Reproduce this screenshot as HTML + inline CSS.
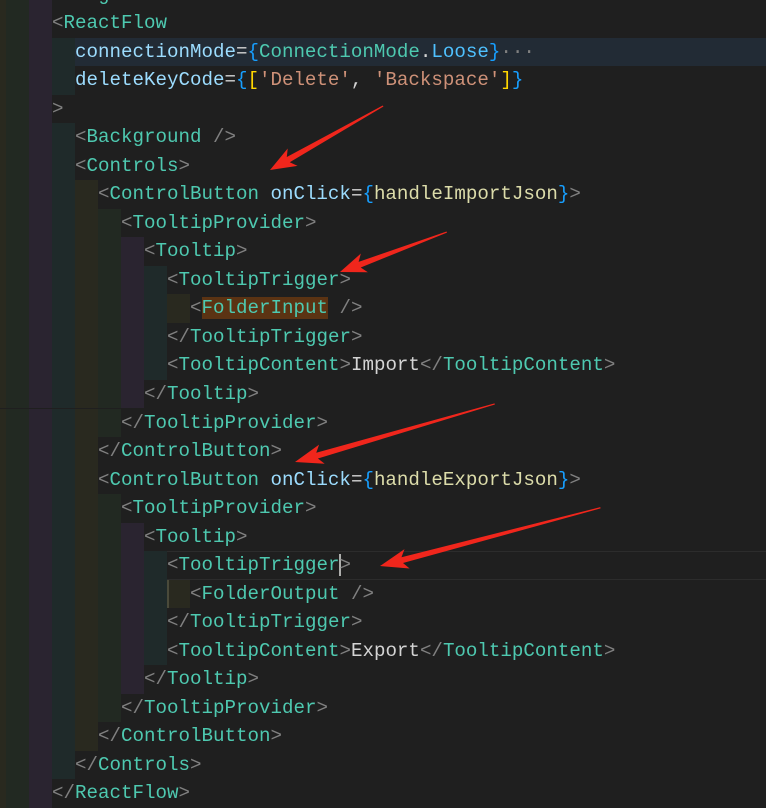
<!DOCTYPE html>
<html><head><meta charset="utf-8"><style>
html,body{margin:0;padding:0;background:#1f1f1f;width:766px;height:808px;overflow:hidden}
#ed{position:relative;width:766px;height:808px;font-family:"Liberation Mono",monospace;font-size:19.17px;color:#d4d4d4}
#ls{position:absolute;left:0;top:1.5px;width:766px;height:808px}
.l{position:absolute;left:0;width:766px;height:28.52px;line-height:28.52px;white-space:pre}
.g{display:inline-block;height:28.52px;vertical-align:top}
.Y{background:#29291f}.G{background:#222922}.P{background:#2a2430}.T{background:#1f2a2a}
.w6{width:6px}.w23{width:23px}
.b{color:#808080}.t{color:#4ec9b0}.a{color:#9cdcfe}.c{color:#179fff}.y{color:#ffd700}.s{color:#ce9178}.f{color:#dcdcaa}.v{color:#4fc1ff}
.hl{background:#222b35}
.cur{box-shadow:inset 0 1px 0 #2c2c2c,inset 0 -1px 0 #2c2c2c}
.fi{background:#5b3313}
</style></head><body><div id="ed"><div id="ls">
<div class="l" style="top:-20.8px"><span class="g w6 Y"></span><span class="g w23 G"></span><span class="g w23 P"></span><span class="b">&lt;/</span><span class="t">svg</span><span class="b">&gt;</span></div>
<div class="l" style="top:7.72px"><span class="g w6 Y"></span><span class="g w23 G"></span><span class="g w23 P"></span><span class="b">&lt;</span><span class="t">ReactFlow</span></div>
<div class="l hl" style="top:36.24px"><span class="g w6 Y"></span><span class="g w23 G"></span><span class="g w23 P"></span><span class="g w23 T"></span><span class="a">connectionMode</span>=<span class="c">{</span><span class="t">ConnectionMode</span>.<span class="v">Loose</span><span class="c">}</span><span class="b">···</span></div>
<div class="l" style="top:64.76px"><span class="g w6 Y"></span><span class="g w23 G"></span><span class="g w23 P"></span><span class="g w23 T"></span><span class="a">deleteKeyCode</span>=<span class="c">{</span><span class="y">[</span><span class="s">'Delete'</span>, <span class="s">'Backspace'</span><span class="y">]</span><span class="c">}</span></div>
<div class="l" style="top:93.28px"><span class="g w6 Y"></span><span class="g w23 G"></span><span class="g w23 P"></span><span class="b">&gt;</span></div>
<div class="l" style="top:121.8px"><span class="g w6 Y"></span><span class="g w23 G"></span><span class="g w23 P"></span><span class="g w23 T"></span><span class="b">&lt;</span><span class="t">Background</span> <span class="b">/&gt;</span></div>
<div class="l" style="top:150.32px"><span class="g w6 Y"></span><span class="g w23 G"></span><span class="g w23 P"></span><span class="g w23 T"></span><span class="b">&lt;</span><span class="t">Controls</span><span class="b">&gt;</span></div>
<div class="l" style="top:178.84px"><span class="g w6 Y"></span><span class="g w23 G"></span><span class="g w23 P"></span><span class="g w23 T"></span><span class="g w23 Y"></span><span class="b">&lt;</span><span class="t">ControlButton</span> <span class="a">onClick</span>=<span class="c">{</span><span class="f">handleImportJson</span><span class="c">}</span><span class="b">&gt;</span></div>
<div class="l" style="top:207.36px"><span class="g w6 Y"></span><span class="g w23 G"></span><span class="g w23 P"></span><span class="g w23 T"></span><span class="g w23 Y"></span><span class="g w23 G"></span><span class="b">&lt;</span><span class="t">TooltipProvider</span><span class="b">&gt;</span></div>
<div class="l" style="top:235.88px"><span class="g w6 Y"></span><span class="g w23 G"></span><span class="g w23 P"></span><span class="g w23 T"></span><span class="g w23 Y"></span><span class="g w23 G"></span><span class="g w23 P"></span><span class="b">&lt;</span><span class="t">Tooltip</span><span class="b">&gt;</span></div>
<div class="l" style="top:264.4px"><span class="g w6 Y"></span><span class="g w23 G"></span><span class="g w23 P"></span><span class="g w23 T"></span><span class="g w23 Y"></span><span class="g w23 G"></span><span class="g w23 P"></span><span class="g w23 T"></span><span class="b">&lt;</span><span class="t">TooltipTrigger</span><span class="b">&gt;</span></div>
<div class="l" style="top:292.92px"><span class="g w6 Y"></span><span class="g w23 G"></span><span class="g w23 P"></span><span class="g w23 T"></span><span class="g w23 Y"></span><span class="g w23 G"></span><span class="g w23 P"></span><span class="g w23 T"></span><span class="g w23 Y"></span><span class="b">&lt;</span><span class="t fi">FolderInput</span> <span class="b">/&gt;</span></div>
<div class="l" style="top:321.44px"><span class="g w6 Y"></span><span class="g w23 G"></span><span class="g w23 P"></span><span class="g w23 T"></span><span class="g w23 Y"></span><span class="g w23 G"></span><span class="g w23 P"></span><span class="g w23 T"></span><span class="b">&lt;/</span><span class="t">TooltipTrigger</span><span class="b">&gt;</span></div>
<div class="l" style="top:349.96px"><span class="g w6 Y"></span><span class="g w23 G"></span><span class="g w23 P"></span><span class="g w23 T"></span><span class="g w23 Y"></span><span class="g w23 G"></span><span class="g w23 P"></span><span class="g w23 T"></span><span class="b">&lt;</span><span class="t">TooltipContent</span><span class="b">&gt;</span>Import<span class="b">&lt;/</span><span class="t">TooltipContent</span><span class="b">&gt;</span></div>
<div class="l" style="top:378.48px"><span class="g w6 Y"></span><span class="g w23 G"></span><span class="g w23 P"></span><span class="g w23 T"></span><span class="g w23 Y"></span><span class="g w23 G"></span><span class="g w23 P"></span><span class="b">&lt;/</span><span class="t">Tooltip</span><span class="b">&gt;</span></div>
<div class="l" style="top:407px"><span class="g w6 Y"></span><span class="g w23 G"></span><span class="g w23 P"></span><span class="g w23 T"></span><span class="g w23 Y"></span><span class="g w23 G"></span><span class="b">&lt;/</span><span class="t">TooltipProvider</span><span class="b">&gt;</span></div>
<div class="l" style="top:435.52px"><span class="g w6 Y"></span><span class="g w23 G"></span><span class="g w23 P"></span><span class="g w23 T"></span><span class="g w23 Y"></span><span class="b">&lt;/</span><span class="t">ControlButton</span><span class="b">&gt;</span></div>
<div class="l" style="top:464.04px"><span class="g w6 Y"></span><span class="g w23 G"></span><span class="g w23 P"></span><span class="g w23 T"></span><span class="g w23 Y"></span><span class="b">&lt;</span><span class="t">ControlButton</span> <span class="a">onClick</span>=<span class="c">{</span><span class="f">handleExportJson</span><span class="c">}</span><span class="b">&gt;</span></div>
<div class="l" style="top:492.56px"><span class="g w6 Y"></span><span class="g w23 G"></span><span class="g w23 P"></span><span class="g w23 T"></span><span class="g w23 Y"></span><span class="g w23 G"></span><span class="b">&lt;</span><span class="t">TooltipProvider</span><span class="b">&gt;</span></div>
<div class="l" style="top:521.08px"><span class="g w6 Y"></span><span class="g w23 G"></span><span class="g w23 P"></span><span class="g w23 T"></span><span class="g w23 Y"></span><span class="g w23 G"></span><span class="g w23 P"></span><span class="b">&lt;</span><span class="t">Tooltip</span><span class="b">&gt;</span></div>
<div class="l cur" style="top:549.6px"><span class="g w6 Y"></span><span class="g w23 G"></span><span class="g w23 P"></span><span class="g w23 T"></span><span class="g w23 Y"></span><span class="g w23 G"></span><span class="g w23 P"></span><span class="g w23 T"></span><span class="b">&lt;</span><span class="t">TooltipTrigger</span><span class="b" style="box-shadow:inset 2px 0 0 #aeafad">&gt;</span></div>
<div class="l" style="top:578.12px"><span class="g w6 Y"></span><span class="g w23 G"></span><span class="g w23 P"></span><span class="g w23 T"></span><span class="g w23 Y"></span><span class="g w23 G"></span><span class="g w23 P"></span><span class="g w23 T"></span><span class="g w23 Y" style="box-shadow:inset 2px 0 0 #4a4a3a"></span><span class="b">&lt;</span><span class="t">FolderOutput</span> <span class="b">/&gt;</span></div>
<div class="l" style="top:606.64px"><span class="g w6 Y"></span><span class="g w23 G"></span><span class="g w23 P"></span><span class="g w23 T"></span><span class="g w23 Y"></span><span class="g w23 G"></span><span class="g w23 P"></span><span class="g w23 T"></span><span class="b">&lt;/</span><span class="t">TooltipTrigger</span><span class="b">&gt;</span></div>
<div class="l" style="top:635.16px"><span class="g w6 Y"></span><span class="g w23 G"></span><span class="g w23 P"></span><span class="g w23 T"></span><span class="g w23 Y"></span><span class="g w23 G"></span><span class="g w23 P"></span><span class="g w23 T"></span><span class="b">&lt;</span><span class="t">TooltipContent</span><span class="b">&gt;</span>Export<span class="b">&lt;/</span><span class="t">TooltipContent</span><span class="b">&gt;</span></div>
<div class="l" style="top:663.68px"><span class="g w6 Y"></span><span class="g w23 G"></span><span class="g w23 P"></span><span class="g w23 T"></span><span class="g w23 Y"></span><span class="g w23 G"></span><span class="g w23 P"></span><span class="b">&lt;/</span><span class="t">Tooltip</span><span class="b">&gt;</span></div>
<div class="l" style="top:692.2px"><span class="g w6 Y"></span><span class="g w23 G"></span><span class="g w23 P"></span><span class="g w23 T"></span><span class="g w23 Y"></span><span class="g w23 G"></span><span class="b">&lt;/</span><span class="t">TooltipProvider</span><span class="b">&gt;</span></div>
<div class="l" style="top:720.72px"><span class="g w6 Y"></span><span class="g w23 G"></span><span class="g w23 P"></span><span class="g w23 T"></span><span class="g w23 Y"></span><span class="b">&lt;/</span><span class="t">ControlButton</span><span class="b">&gt;</span></div>
<div class="l" style="top:749.24px"><span class="g w6 Y"></span><span class="g w23 G"></span><span class="g w23 P"></span><span class="g w23 T"></span><span class="b">&lt;/</span><span class="t">Controls</span><span class="b">&gt;</span></div>
<div class="l" style="top:777.76px"><span class="g w6 Y"></span><span class="g w23 G"></span><span class="g w23 P"></span><span class="b">&lt;/</span><span class="t">ReactFlow</span><span class="b">&gt;</span></div>
</div>
<svg width="766" height="808" style="position:absolute;left:0;top:0" fill="#f0261c">
<g transform="translate(270,170) rotate(-29.5)"><polygon points="0,0 26,-10 21,-3 130,-0.6 130,0.6 21,3 26,10"/></g>
<g transform="translate(340,272) rotate(-20.5)"><polygon points="0,0 26,-10 21,-3 114,-0.6 114,0.6 21,3 26,10"/></g>
<g transform="translate(295,462) rotate(-16.2)"><polygon points="0,0 28,-10 23,-3 208,-0.6 208,0.6 23,3 28,10"/></g>
<g transform="translate(380,566) rotate(-14.8)"><polygon points="0,0 28,-10 23,-3 228,-0.6 228,0.6 23,3 28,10"/></g>
</svg>
</div></body></html>
